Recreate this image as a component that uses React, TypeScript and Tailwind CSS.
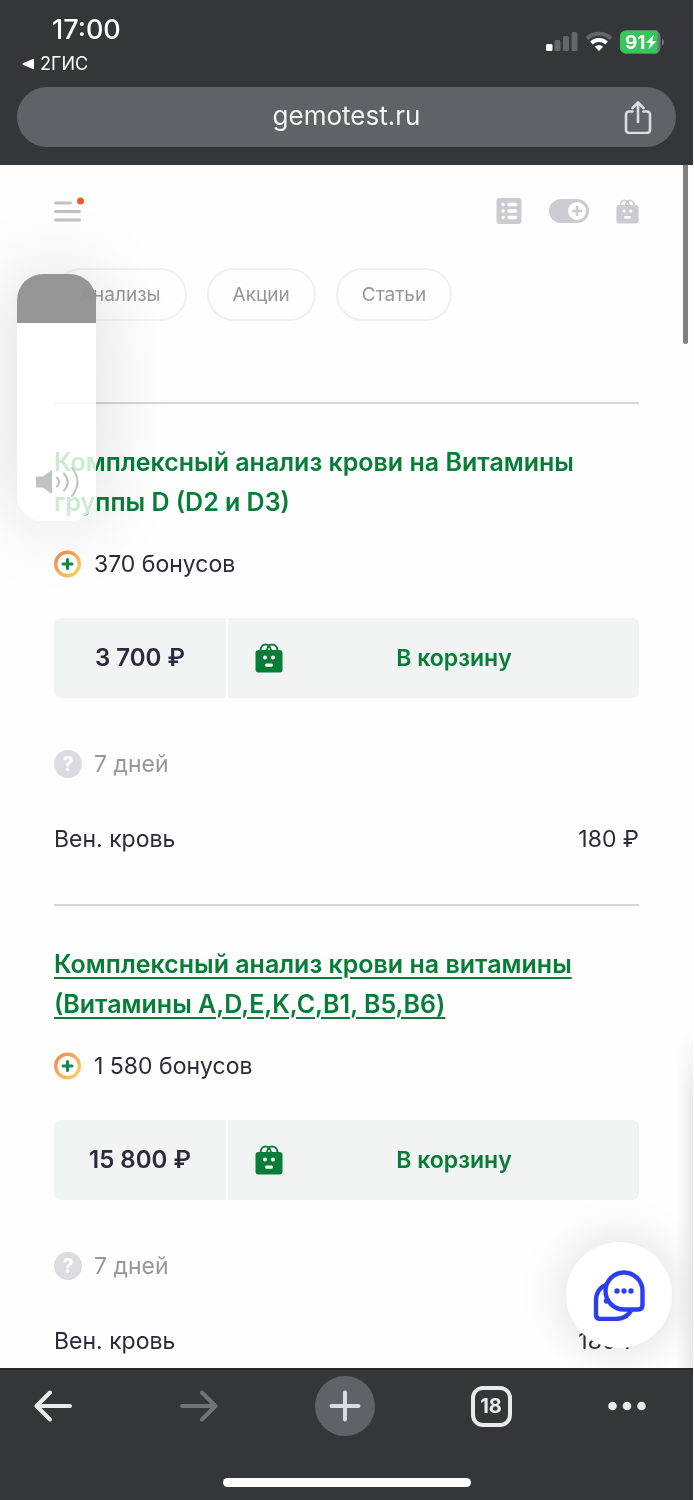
import { useState } from "react";

const ORDERS = [
  {
    id: 1,
    title: "Комплексный анализ крови на Витамины группы D (D2 и D3)",
    bonus: "370 бонусов",
    price: "3 700 ₽",
    days: "7 дней",
    material: "Вен. кровь",
    materialPrice: "180 ₽",
    underlined: false,
  },
  {
    id: 2,
    title: "Комплексный анализ крови на витамины (Витамины A,D,E,K,C,B1, B5,B6)",
    bonus: "1 580 бонусов",
    price: "15 800 ₽",
    days: "7 дней",
    material: "Вен. кровь",
    materialPrice: "180 ₽",
    underlined: true,
  },
];

const TABS = ["Анализы", "Акции", "Статьи"];

function BagIcon({ className }: { className?: string }) {
  return (
    <svg viewBox="0 0 28 30" className={className} aria-hidden="true">
      <path
        d="M5.500 8C5.500 3.500 8 1.500 10.500 1.500S16 3.500 16 8M12 8c0-4.500 2.500-6.500 5-6.500S22.500 3.500 22.500 8"
        fill="none"
        stroke="currentColor"
        strokeWidth="2"
      />
      <rect x="0.500" y="7" width="27" height="22.500" rx="3" fill="currentColor" />
      <circle cx="10" cy="14.500" r="2" fill="#fff" />
      <circle cx="18" cy="14.500" r="2" fill="#fff" />
      <rect x="10" y="20.500" width="8" height="3.200" rx="1.600" fill="#fff" />
      <path d="M8 6.500q.5-3 2.500-3.500l1.500 1-1.500 2.500zM15.500 3.500q2-1 3 0 1.500 1 1.500 3h-3z" fill="#fff" />
    </svg>
  );
}

function BonusIcon() {
  return (
    <svg viewBox="0 0 28 28" className="size-7 shrink-0" aria-hidden="true">
      <defs>
        <linearGradient id="bonus-ring" x1="0" y1="0" x2="1" y2="1">
          <stop offset="0" stopColor="#f08a55" />
          <stop offset="1" stopColor="#fbd35c" />
        </linearGradient>
      </defs>
      <circle cx="13.500" cy="14" r="11.800" fill="none" stroke="url(#bonus-ring)" strokeWidth="3.400" />
      <path d="M13.500 9.500v9M9 14h9" stroke="#128a4a" strokeWidth="3" strokeLinecap="round" />
    </svg>
  );
}

function StatusIcons() {
  return (
    <svg viewBox="0 0 118 24" className="h-6 w-[118px]" aria-label="91%">
      <rect x="0" y="14" width="6.500" height="7" rx="1.500" fill="#fff" />
      <g fill="#64676a">
        <rect x="8.500" y="10" width="6" height="11" rx="1.500" />
        <rect x="17" y="6" width="6" height="15" rx="1.500" />
        <rect x="25.500" y="2" width="6" height="19" rx="1.500" />
      </g>
      <g fill="none" strokeWidth="4">
        <path d="M41 8.500a17.500 17.500 0 0 1 24 0" stroke="#64676a" />
        <path d="M45.500 13a11 11 0 0 1 15 0" stroke="#fff" />
      </g>
      <path d="M53 21l-4.200-4.300a6.300 6.300 0 0 1 8.400 0z" fill="#fff" />
      <rect x="74" y="0.500" width="40.500" height="23" rx="6" fill="#74777a" />
      <path d="M80 0.500h31.500v23H80a6 6 0 0 1-6-6v-11a6 6 0 0 1 6-6z" fill="#34c759" />
      <path d="M116 8.500c2.500 1 2.500 6 0 7z" fill="#74777a" />
      <text x="79" y="19" fill="#fff" fontFamily="Inter, sans-serif" fontSize="19" fontWeight="700">
        91
      </text>
      <path d="M108 4.500l-8 8.500h4.500l-2 6.500 8-8.500H106z" fill="#fff" />
    </svg>
  );
}

function BrowserHeader() {
  return (
    <header className="shrink-0 bg-[#333739] pb-[18px] text-white">
      <div className="flex h-[87px] items-start justify-between pr-[29px] pl-5">
        <div>
          <div className="mt-3 pl-8 text-[27px] leading-9 font-medium">17:00</div>
          <a href="#back" className="flex items-center gap-1 text-lg leading-8">
            <svg viewBox="0 0 14 12" className="h-3 w-4" aria-hidden="true">
              <path d="M13 1.500v9q0 1.200-1.300 0.600L1.800 6.700q-1-0.700 0-1.400L11.700 0.900Q13 0.300 13 1.500z" fill="#fff" />
            </svg>
            2ГИС
          </a>
        </div>
        <div className="mt-[30px]">
          <StatusIcons />
        </div>
      </div>
      <div className="mx-[17px] grid h-[60px] grid-cols-[1fr_auto_1fr] items-center rounded-full bg-[#5f6368] px-6">
        <span />
        <span className="pb-0.5 text-[26px] leading-8 text-gray-100">gemotest.ru</span>
        <button type="button" aria-label="Поделиться" className="justify-self-end">
          <svg
            viewBox="0 0 28 34"
            className="h-[34px] w-7"
            fill="none"
            stroke="#dadce0"
            strokeWidth="2.600"
            strokeLinecap="round"
            strokeLinejoin="round"
          >
            <path d="M8.500 11.500H5a3 3 0 0 0-3 3v15.500a3 3 0 0 0 3 3h18a3 3 0 0 0 3-3V14.500a3 3 0 0 0-3-3h-3.500" />
            <path d="M14 22V2.500M8.500 8L14 2.500 19.500 8" />
          </svg>
        </button>
      </div>
    </header>
  );
}

function SiteNav() {
  return (
    <nav>
      <div className="flex h-[92px] items-center justify-between">
        <button type="button" aria-label="Меню">
          <svg viewBox="0 0 32 28" className="h-7 w-8">
            <path d="M1.500 6h15M1.500 14.500h24M1.500 23h24" stroke="#bfc0c4" strokeWidth="3" strokeLinecap="round" />
            <circle cx="26.500" cy="4" r="3.500" fill="#ee5a2c" />
          </svg>
        </button>
        <div className="flex items-center gap-[26px] text-[#cbcbd1]">
          <button type="button" aria-label="Список">
            <svg viewBox="0 0 26 28" className="h-7 w-[26px]">
              <rect x="0.500" y="1" width="25" height="26" rx="3" fill="currentColor" />
              <g stroke="#fff" strokeWidth="3.400" strokeLinecap="round">
                <path d="M7 7.500h.2M7 14h.2M7 20.500h.2M13 7.500h6.500M13 14h6.500M13 20.500h6.500" />
              </g>
            </svg>
          </button>
          <button type="button" aria-label="Бонусы">
            <svg viewBox="0 0 42 26" className="h-[26px] w-[42px]">
              <rect x="1" y="1" width="40" height="24" rx="12" fill="currentColor" />
              <circle cx="29" cy="13" r="9" fill="#fff" />
              <path d="M29 8v10M24 13h10" stroke="currentColor" strokeWidth="2.600" />
            </svg>
          </button>
          <button type="button" aria-label="Корзина">
            <BagIcon className="h-[25px] w-[23px]" />
          </button>
        </div>
      </div>
      <div className="mt-[11px] flex gap-5">
        {TABS.map((tab) => (
          <a
            key={tab}
            href="#tab"
            className="rounded-full border-2 border-[#f0f0f1] px-6 py-[10px] text-[19px] leading-[29px] text-[#97989e]"
          >
            {tab}
          </a>
        ))}
      </div>
    </nav>
  );
}

function OrderItem({ item }: { item: (typeof ORDERS)[number] }) {
  return (
    <article className="border-t-2 border-[#d5d5da] pt-[38px] pb-[49px] text-[23px] leading-8 text-[#2b2b3b]">
      <h2 className="text-[25px] leading-10 font-semibold text-[#077d37]">
        <a href="#item" className={item.underlined ? "underline decoration-2 underline-offset-4" : ""}>
          {item.title}
        </a>
      </h2>
      <div className="mt-[26px] flex items-center gap-3">
        <BonusIcon />
        <span>{item.bonus}</span>
      </div>
      <div className="mt-[38px] flex h-20 gap-0.5 overflow-hidden rounded-md">
        <div className="flex w-[172px] shrink-0 items-center justify-center bg-[#f2f4f4] text-2xl font-semibold">
          {item.price}
        </div>
        <button
          type="button"
          className="flex flex-1 items-center bg-[#f2f4f4] pr-3.5 pl-[27px] font-semibold text-[#077d37]"
        >
          <BagIcon className="h-[30px] w-7" />
          <span className="flex-1">В корзину</span>
        </button>
      </div>
      <div className="mt-[50px] flex items-center gap-3 text-[#97979d]">
        <button
          type="button"
          aria-label="Подробнее"
          className="flex size-7 items-center justify-center rounded-full bg-[#dcdbe1] text-xl font-bold text-white"
        >
          ?
        </button>
        {item.days}
      </div>
      <div className="mt-[43px] flex items-center justify-between">
        <span>{item.material}</span>
        <span>{item.materialPrice}</span>
      </div>
    </article>
  );
}

function VolumeOverlay() {
  const [volume, setVolume] = useState(80);

  return (
    <div className="absolute top-[109px] left-[17px] h-[247px] w-[79px] rounded-[26px] shadow-[0_0_80px_rgba(0,0,0,0.14)]">
      <div className="flex h-full flex-col overflow-hidden rounded-[26px] backdrop-saturate-200">
        <div className="bg-[#939393]/97" style={{ height: `${100 - volume}%` }} />
        <div className="flex flex-1 items-end justify-center bg-white/80 pb-[23px]">
          <svg viewBox="0 0 44 32" className="h-8 w-11" fill="none" stroke="#bfc4c1" strokeWidth="2" strokeLinecap="round">
            <path d="M2 10.500h6L16 4.500q1-.6 1 .6v21.800q0 1.200-1 .6L8 21.500H2q-1 0-1-1v-9q0-1 1-1z" fill="#bfc4c1" stroke="none" />
            <path d="M22 11.500q4 4.500 0 9M29 7.500q7.500 8.500 0 17M37 2q11 14 0 28" />
          </svg>
        </div>
      </div>
      <input
        type="range"
        aria-label="Громкость"
        value={volume}
        onChange={(e) => setVolume(Number(e.target.value))}
        className="absolute inset-0 h-full w-full opacity-0 [direction:rtl] [writing-mode:vertical-lr]"
      />
    </div>
  );
}

function ChatButton() {
  return (
    <button
      type="button"
      aria-label="Чат"
      className="absolute right-[21px] bottom-5 flex size-[106px] items-center justify-center rounded-full bg-white shadow-[0_0_50px_rgba(0,0,0,0.14)]"
    >
      <svg viewBox="0 0 52 52" className="size-[52px]" fill="none" stroke="#2b3ff0" strokeWidth="4.400" strokeLinejoin="round">
        <path d="M13 16C7 18 3 24 3 31v14.500Q3 50 7.500 50H22c8 0 14-4 17-10" />
        <path d="M31 3.500A18.500 18.500 0 1 0 31 40.500h14q4.500 0 4.500-4.500V22A18.500 18.500 0 0 0 31 3.500z" fill="#fff" />
        <g fill="#2b3ff0" stroke="none">
          <circle cx="24" cy="22" r="2.700" />
          <circle cx="31" cy="22" r="2.700" />
          <circle cx="38" cy="22" r="2.700" />
          <circle cx="13.500" cy="32" r="2.700" />
        </g>
      </svg>
    </button>
  );
}

function BrowserToolbar() {
  return (
    <footer className="shrink-0 border-t-2 border-[#26292c] bg-[#333739] pt-1.5">
      <div className="flex h-[60px] items-center justify-between pr-[46px] pl-[23px]">
        <button type="button" aria-label="Назад" className="flex w-[60px] justify-center">
          <svg viewBox="0 0 40 32" className="h-8 w-10" fill="none" stroke="#e8eaed" strokeWidth="4" strokeLinecap="round" strokeLinejoin="round">
            <path d="M37 16H3.500M17 2.500L3.500 16 17 29.500" />
          </svg>
        </button>
        <button type="button" aria-label="Вперёд" className="flex w-[60px] justify-center">
          <svg viewBox="0 0 40 32" className="h-8 w-10" fill="none" stroke="#707377" strokeWidth="4" strokeLinecap="round" strokeLinejoin="round">
            <path d="M3 16h33.500M23 2.500L36.500 16 23 29.500" />
          </svg>
        </button>
        <button type="button" aria-label="Новая вкладка" className="flex size-[60px] items-center justify-center rounded-full bg-[#5f6368]">
          <svg viewBox="0 0 32 32" className="size-8" stroke="#dadce0" strokeWidth="4" strokeLinecap="round">
            <path d="M16 2.500v27M2.500 16h27" />
          </svg>
        </button>
        <button type="button" className="flex w-[60px] justify-center">
          <span className="flex size-[41px] items-center justify-center rounded-xl border-4 border-[#e8eaed] text-xl font-bold text-[#e8eaed]">
            18
          </span>
        </button>
        <button type="button" aria-label="Ещё">
          <svg viewBox="0 0 40 10" className="h-[10px] w-10" fill="#e8eaed">
            <circle cx="5.500" cy="5" r="4.300" />
            <circle cx="20" cy="5" r="4.300" />
            <circle cx="34.500" cy="5" r="4.300" />
          </svg>
        </button>
      </div>
      <div className="flex justify-center pt-[42px] pb-[13px]">
        <div className="h-[9px] w-[248px] rounded-full bg-white" />
      </div>
    </footer>
  );
}

export default function App() {
  return (
    <div className="flex h-screen flex-col bg-white pr-px font-[Inter,sans-serif]">
      <BrowserHeader />
      <main className="relative min-h-0 flex-1 overflow-hidden bg-[#fefefe] px-[54px]">
        <SiteNav />
        <div className="mt-[81px]">
          {ORDERS.map((item) => (
            <OrderItem key={item.id} item={item} />
          ))}
        </div>
        <div className="absolute top-0 right-[5px] h-[179px] w-[5px] rounded-b-full bg-[#808080]" />
        <div className="absolute right-0 bottom-0 h-[340px] w-4 bg-linear-to-r from-transparent to-black/8 mask-t-from-80%" />
        <VolumeOverlay />
        <ChatButton />
      </main>
      <BrowserToolbar />
    </div>
  );
}
